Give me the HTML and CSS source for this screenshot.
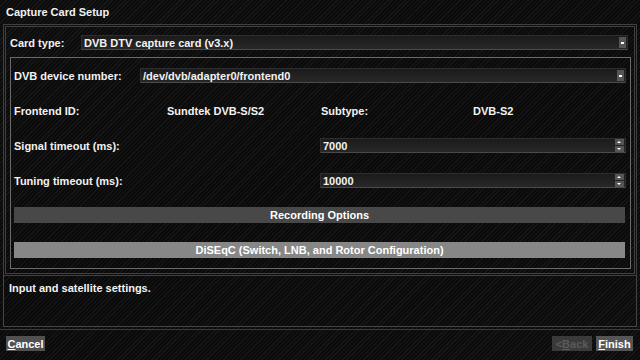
FILE: index.html
```html
<!DOCTYPE html>
<html>
<head>
<meta charset="utf-8">
<link rel="stylesheet" href="styles.css">
</head>
<body>
<div class="screen">
  <div class="title">Capture Card Setup</div>
  <div class="frame">
    <div class="row card-row">
      <span class="label card-label">Card type:</span>
      <div class="combo card-combo"><span class="combo-text">DVB DTV capture card (v3.x)</span><span class="drop"><span class="dash"></span></span></div>
    </div>
    <div class="group">
      <div class="row">
        <span class="label dev-label">DVB device number:</span>
        <div class="combo dev-combo"><span class="combo-text">/dev/dvb/adapter0/frontend0</span><span class="drop"><span class="dash"></span></span></div>
      </div>
      <div class="row info-row">
        <span>Frontend ID:</span>
        <span>Sundtek DVB-S/S2</span>
        <span>Subtype:</span>
        <span>DVB-S2</span>
      </div>
      <div class="row">
        <span class="label spin-label">Signal timeout (ms):</span>
        <div class="spin"><span class="combo-text">7000</span><span class="spin-btns"><span class="sb up"></span><span class="sb down"></span></span></div>
      </div>
      <div class="row">
        <span class="label spin-label">Tuning timeout (ms):</span>
        <div class="spin"><span class="combo-text">10000</span><span class="spin-btns"><span class="sb up"></span><span class="sb down"></span></span></div>
      </div>
      <div class="btn wide rec">Recording Options</div>
      <div class="btn wide diseqc">DiSEqC (Switch, LNB, and Rotor Configuration)</div>
    </div>
  </div>
  <div class="help">Input and satellite settings.</div>
  <div class="footer">
    <div class="btn small cancel"><u>C</u>ancel</div>
    <div class="spacer"></div>
    <div class="btn small back">&lt; <u>B</u>ack</div>
    <div class="btn small finish"><u>F</u>inish</div>
  </div>
</div>
</body>
</html>
```
FILE: styles.css
```css
* { box-sizing: border-box; }
html, body { margin: 0; padding: 0; }
body {
  width: 640px;
  height: 360px;
  overflow: hidden;
  font-family: "Liberation Sans", Arial, sans-serif;
  font-weight: bold;
  font-size: 11px;
  color: #f2f2f2;
  background-color: #101010;
  background-image:
    linear-gradient(160deg, rgba(0,0,0,0) 0%, rgba(0,0,0,0.15) 50%, rgba(0,0,0,0) 100%),
    repeating-linear-gradient(-45deg, #181818 0px, #181818 1px, #0c0c0c 1px, #0c0c0c 3px);
}
.screen { width: 640px; height: 360px; display: flex; flex-direction: column; }
.title {
  height: 24px;
  line-height: 24px;
  padding-left: 6px;
}
.frame {
  margin: 0 3px;
  height: 252px;
  border: 3px double #404040;
  padding: 8px 3px 4px 4px;
  display: flex;
  flex-direction: column;
}
.row { display: flex; align-items: center; height: 15px; }
.card-row { margin-bottom: 7px; }
.card-label { width: 71px; }
.combo, .spin {
  position: relative;
  height: 15px;
  display: flex;
  align-items: center;
  background: linear-gradient(#1b1b1b, #282828);
  border: 1px solid #2e2e2e;
  border-bottom-color: #4a4a4a;
}
.combo-text { padding-left: 2px; flex: 1; }
.card-combo { width: 547px; }
.drop {
  position: absolute;
  right: 1px;
  top: 1px;
  width: 7px;
  height: 11px;
  background: #555;
  display: flex;
  align-items: center;
  justify-content: center;
}
.dash { width: 3px; height: 2px; background: #fff; }
.group {
  height: 212px;
  border: 1px solid #6a6a6a;
  padding: 10px 3px 10px 3px;
  display: flex;
  flex-direction: column;
  gap: 20px;
}
.dev-label { width: 126px; }
.dev-combo { width: 486px; }
.info-row { display: grid; grid-template-columns: 153px 154px 152px 1fr; }
.spin-label { width: 306px; }
.spin { width: 306px; }
.spin-btns {
  position: absolute;
  right: 1px;
  top: 0;
  display: flex;
  flex-direction: column;
  gap: 1px;
}
.sb {
  width: 9px;
  height: 6px;
  background: #555;
  position: relative;
}
.sb::after {
  content: "";
  position: absolute;
  left: 2px;
  width: 0;
  height: 0;
  border-left: 2.5px solid transparent;
  border-right: 2.5px solid transparent;
}
.sb.up::after { top: 2px; border-bottom: 2px solid #fff; }
.sb.down::after { top: 2px; border-top: 2px solid #fff; }
.btn {
  display: flex;
  align-items: center;
  justify-content: center;
  color: #fff;
}
.wide { height: 16px; width: 611px; }
.rec { background: #484848; margin-top: -1px; }
.diseqc { background: #878787; margin-top: -1px; }
.help {
  margin: 0 3px;
  height: 51px;
  border: 1px solid #454545;
  border-top: none;
  padding: 6px 0 0 5px;
}
.footer {
  margin-top: 2px;
  border-top: 1px solid #3a3a3a;
  padding: 6px 7px 0 6px;
  display: flex;
  height: 31px;
  align-items: flex-start;
}
.spacer { flex: 1; }
.small { height: 15px; padding: 0 2px; }
.btn u { text-decoration: underline; text-underline-offset: 1px; }
.cancel { background: #505050; width: 39px; }
.back { background: #3a3a3a; color: #5a5a5a; width: 40px; margin-right: 4px; }
.finish { background: #555; width: 37px; }
```
